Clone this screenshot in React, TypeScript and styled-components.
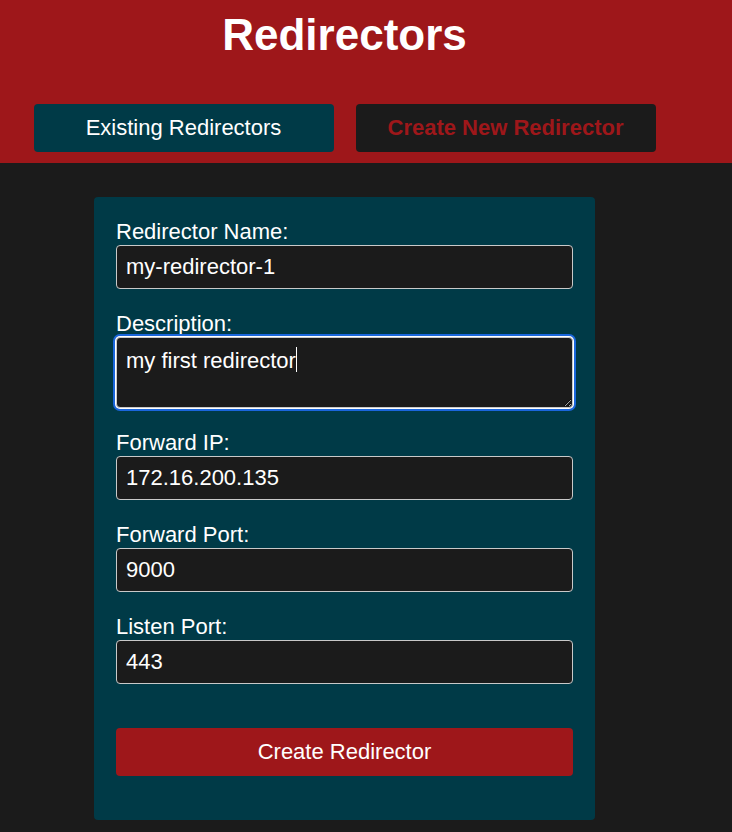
import React from "react";
import styled, { createGlobalStyle } from "styled-components";

const Global = createGlobalStyle`
  html, body {
    margin: 0;
    padding: 0;
    background: #1b1b1b;
    font-family: "Liberation Sans", Arial, sans-serif;
    color: #ffffff;
  }
  * { box-sizing: border-box; }
`;

const Header = styled.header`
  background: #9e171a;
  padding: 10px 0 11px;
`;

const Inner = styled.div`
  width: 689px;
  display: flex;
  flex-direction: column;
  align-items: center;
`;

const Title = styled.h1`
  margin: 0;
  font-size: 44px;
  font-weight: 700;
  color: #ffffff;
  line-height: 50px;
`;

const Tabs = styled.nav`
  display: flex;
  gap: 22px;
  margin-top: 44px;
`;

const Tab = styled.button<{ $active?: boolean }>`
  width: 300px;
  height: 48px;
  border: none;
  border-radius: 4px;
  font-family: "Liberation Sans", Arial, sans-serif;
  font-size: 22px;
  cursor: pointer;
  background: ${(p) => (p.$active ? "#1b1b1b" : "#003a47")};
  color: ${(p) => (p.$active ? "#9e171a" : "#ffffff")};
  font-weight: ${(p) => (p.$active ? 700 : 400)};
`;

const Main = styled.main`
  padding-top: 34px;
`;

const Card = styled.form`
  width: 501px;
  background: #003a47;
  border-radius: 4px;
  padding: 22px 22px 44px;
  display: flex;
  flex-direction: column;
`;

const Field = styled.div`
  display: flex;
  flex-direction: column;
  margin-bottom: 22px;
`;

const Label = styled.label`
  font-size: 22px;
  line-height: 26px;
  color: #ffffff;
`;

const Input = styled.input`
  height: 44px;
  width: 100%;
  background: #1b1b1b;
  border: 1px solid #c9c9c9;
  border-radius: 4px;
  padding: 0 9px;
  color: #ffffff;
  font-family: "Liberation Sans", Arial, sans-serif;
  font-size: 22px;
  outline: none;
`;

const AreaWrap = styled.div`
  position: relative;
  display: flex;
`;

const TextArea = styled.textarea`
  height: 71px;
  width: 100%;
  background: #1b1b1b;
  border: 1px solid #c9c9c9;
  border-radius: 4px;
  padding: 10px 9px;
  color: #ffffff;
  font-family: "Liberation Sans", Arial, sans-serif;
  font-size: 22px;
  line-height: 25px;
  outline: none;
  resize: vertical;
  box-shadow: 0 0 0 1px #ffffff, 0 0 0 3px #1a66dc;
`;

const Caret = styled.span`
  position: absolute;
  left: 180px;
  top: 10px;
  width: 1px;
  height: 25px;
  background: #ffffff;
  pointer-events: none;
`;

const Submit = styled.button`
  margin-top: 22px;
  height: 48px;
  width: 100%;
  background: #9e171a;
  border: none;
  border-radius: 4px;
  color: #ffffff;
  font-family: "Liberation Sans", Arial, sans-serif;
  font-size: 22px;
  cursor: pointer;
`;

const fields = [
  { id: "fip", label: "Forward IP:", value: "172.16.200.135" },
  { id: "fport", label: "Forward Port:", value: "9000" },
  { id: "lport", label: "Listen Port:", value: "443" },
];

export default function App() {
  return (
    <>
      <Global />
      <Header>
        <Inner>
          <Title>Redirectors</Title>
          <Tabs>
            <Tab type="button">Existing Redirectors</Tab>
            <Tab type="button" $active>
              Create New Redirector
            </Tab>
          </Tabs>
        </Inner>
      </Header>
      <Main>
        <Inner>
          <Card onSubmit={(e) => e.preventDefault()}>
            <Field>
              <Label htmlFor="name">Redirector Name:</Label>
              <Input id="name" defaultValue="my-redirector-1" />
            </Field>
            <Field>
              <Label htmlFor="desc">Description:</Label>
              <AreaWrap>
                <TextArea id="desc" defaultValue="my first redirector" />
                <Caret />
              </AreaWrap>
            </Field>
            {fields.map((f) => (
              <Field key={f.id}>
                <Label htmlFor={f.id}>{f.label}</Label>
                <Input id={f.id} defaultValue={f.value} />
              </Field>
            ))}
            <Submit type="submit">Create Redirector</Submit>
          </Card>
        </Inner>
      </Main>
    </>
  );
}
